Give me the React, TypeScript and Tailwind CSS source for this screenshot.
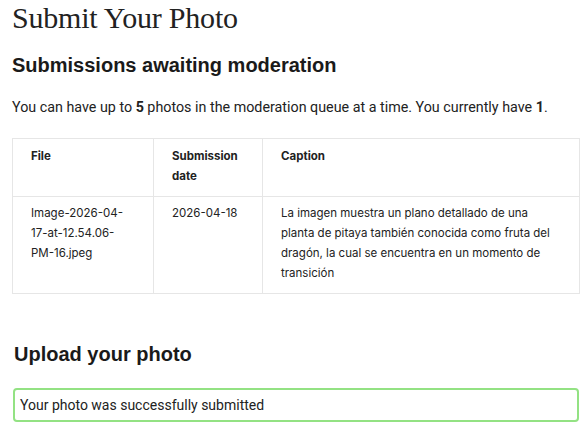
import React from "react";

const rows = [
  {
    file: "Image-2026-04-17-at-12.54.06-PM-16.jpeg",
    date: "2026-04-18",
    caption:
      "La imagen muestra un plano detallado de una planta de pitaya también conocida como fruta del dragón, la cual se encuentra en un momento de transición",
  },
];

export default function App() {
  return (
    <div className="bg-white text-[#1f1f1f] px-3 w-[585px] h-[432px] overflow-hidden">
      <h1 className="font-['Liberation_Serif',serif] text-[30px] leading-[34px] pt-[1px] text-[#222] tracking-[-0.2px]">
        Submit Your Photo
      </h1>

      <h2 className="font-['Liberation_Sans',sans-serif] font-bold text-[20px] leading-[24px] mt-[18px] text-[#1a1a1a]">
        Submissions awaiting moderation
      </h2>

      <p className="font-['Roboto',sans-serif] text-[14.3px] leading-[20px] mt-[20px] text-[#222]">
        You can have up to <b>5</b> photos in the moderation queue at a time. You currently have <b>1</b>.
      </p>

      <table className="mt-[21px] w-[568px] border-collapse font-['Inter',sans-serif] text-[11.5px] leading-[20px] text-[#222]">
        <thead>
          <tr>
            <th className="w-[141px] border border-[#e6e6e6] text-left align-top font-bold pl-[18px] pr-[18px] pt-[7px] pb-[10px]">
              File
            </th>
            <th className="w-[109px] border border-[#e6e6e6] text-left align-top font-bold pl-[18px] pr-3 pt-[7px] pb-[10px]">
              Submission date
            </th>
            <th className="border border-[#e6e6e6] text-left align-top font-bold pl-[18px] pr-[24px] pt-[7px] pb-[10px]">
              Caption
            </th>
          </tr>
        </thead>
        <tbody>
          {rows.map((r) => (
            <tr key={r.file}>
              <td className="border border-[#e6e6e6] align-top pl-[18px] pr-[18px] pt-[6px] pb-[10px]">
                {r.file}
              </td>
              <td className="border border-[#e6e6e6] align-top pl-[18px] pr-3 pt-[6px] pb-[10px]">{r.date}</td>
              <td className="border border-[#e6e6e6] align-top pl-[18px] pr-[24px] pt-[6px] pb-[10px]">{r.caption}</td>
            </tr>
          ))}
        </tbody>
      </table>

      <h2 className="font-['Liberation_Sans',sans-serif] font-bold text-[20px] leading-[24px] mt-[48px] ml-[2px] text-[#1a1a1a]">
        Upload your photo
      </h2>

      <div className="mt-[22px] ml-[1px] w-[566px] border-2 border-[#93e283] rounded-[4px] px-[5px] py-[4px] font-['Roboto',sans-serif] text-[14px] leading-[22px] text-[#222]">
        Your photo was successfully submitted
      </div>
    </div>
  );
}
